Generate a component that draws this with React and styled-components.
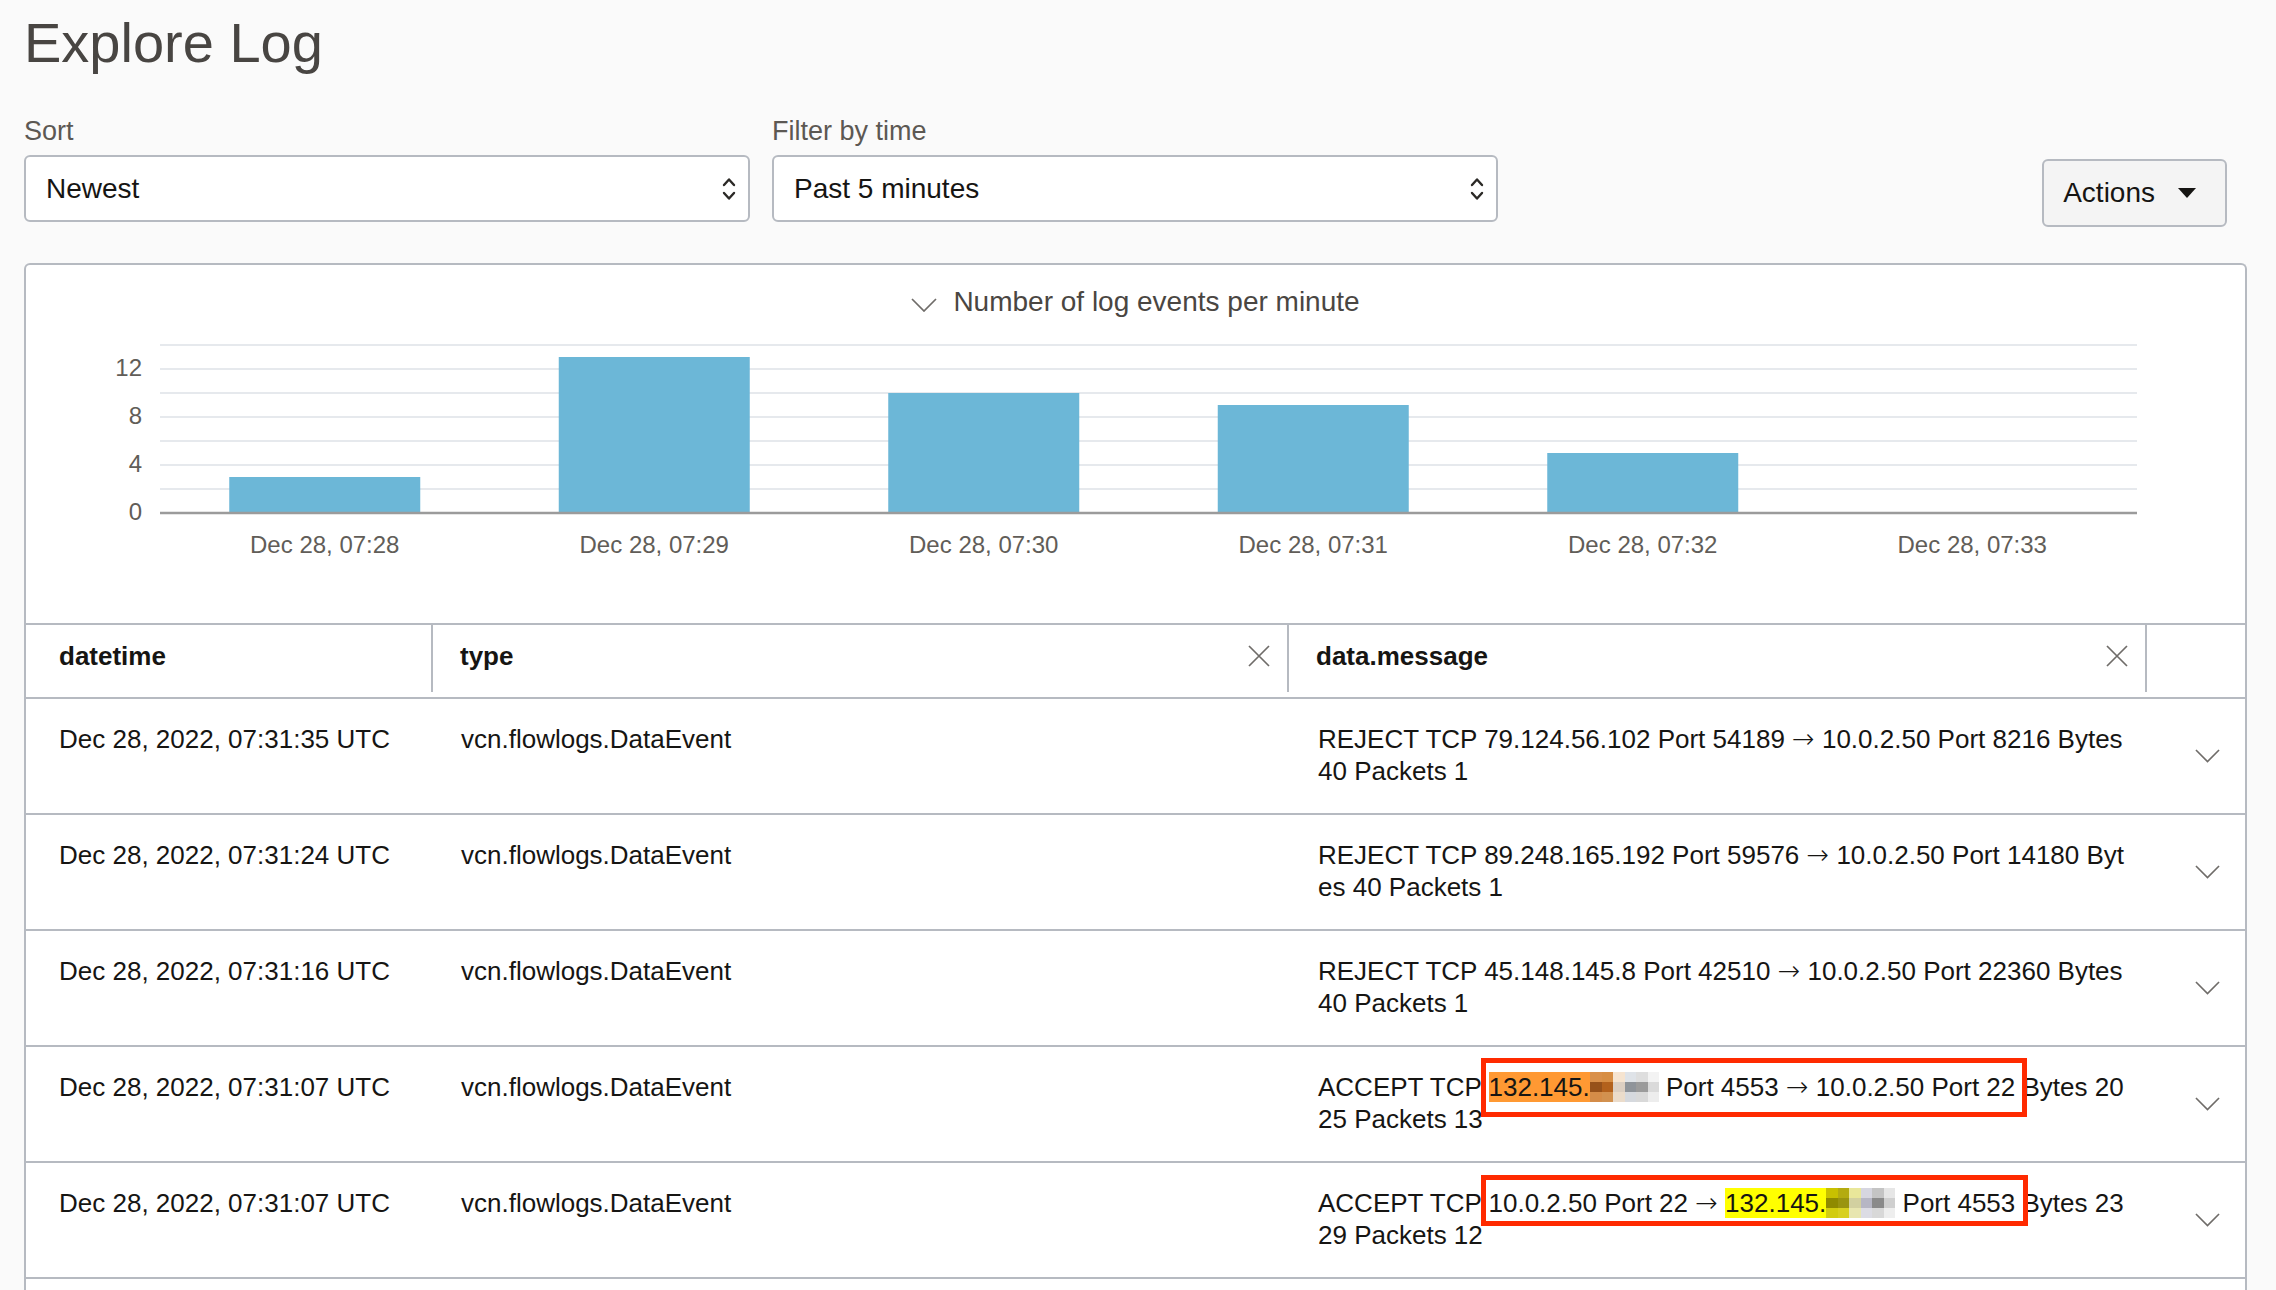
import React from "react";
import styled, { createGlobalStyle } from "styled-components";

const GlobalStyle = createGlobalStyle`
  * {
    box-sizing: border-box;
  }
  body {
    margin: 0;
    background: #fafafa;
    font-family: "Liberation Sans", Arial, Helvetica, sans-serif;
    color: #161513;
  }
`;

const LINE = "#b6bac1";

const chartBars = [
  { label: "Dec 28, 07:28", value: 3 },
  { label: "Dec 28, 07:29", value: 13 },
  { label: "Dec 28, 07:30", value: 10 },
  { label: "Dec 28, 07:31", value: 9 },
  { label: "Dec 28, 07:32", value: 5 },
  { label: "Dec 28, 07:33", value: 0 },
];

// pixelated (censored) part of the address, column by column
const orangeMask = [
  ["#d9904a", "#d78e44", "#f6e4d0", "#dfe3e8", "#dedede", "#f3f3f3"],
  ["#96511a", "#b3611c", "#dccfc2", "#8f949a", "#9b9b9b", "#dadada"],
  ["#d48c48", "#d2914f", "#ebdccb", "#d6d9de", "#d9d9d9", "#ededed"],
];

const yellowMask = [
  ["#c8c000", "#b4ab10", "#e9e79a", "#d6d6e0", "#c4c4c4", "#e6e6e6"],
  ["#8f8a00", "#9a9410", "#d2d0a0", "#b6b6c4", "#8a8a8a", "#cfcfcf"],
  ["#d2cc10", "#d8d020", "#e8e6b0", "#dcdce4", "#d8d8d8", "#eeeeee"],
];

const Mosaic = ({ cells }) => (
  <MaskSvg
    width="69"
    height="30"
    viewBox="0 0 6 3"
    preserveAspectRatio="none"
    shapeRendering="crispEdges"
  >
    {cells.map((row, r) =>
      row.map((c, i) => (
        <rect key={`${r}-${i}`} x={i} y={r} width="1" height="1" fill={c} />
      ))
    )}
  </MaskSvg>
);

// the arrow glyph is drawn from a font that has a long thin arrow
const withArrows = (text) => {
  if (typeof text !== "string") return text;
  const parts = text.split("→");
  return parts.map((part, i) => (
    <React.Fragment key={i}>
      {part}
      {i < parts.length - 1 && <Arrow>→</Arrow>}
    </React.Fragment>
  ));
};

const getRows = () => [
  {
    time: "Dec 28, 2022, 07:31:35 UTC",
    lines: [
      "REJECT TCP 79.124.56.102 Port 54189 → 10.0.2.50 Port 8216 Bytes",
      "40 Packets 1",
    ],
  },
  {
    time: "Dec 28, 2022, 07:31:24 UTC",
    lines: [
      "REJECT TCP 89.248.165.192 Port 59576 → 10.0.2.50 Port 14180 Byt",
      "es 40 Packets 1",
    ],
  },
  {
    time: "Dec 28, 2022, 07:31:16 UTC",
    lines: [
      "REJECT TCP 45.148.145.8 Port 42510 → 10.0.2.50 Port 22360 Bytes",
      "40 Packets 1",
    ],
  },
  {
    time: "Dec 28, 2022, 07:31:07 UTC",
    lines: [
      <>
        ACCEPT TCP{" "}
        <Marked $top={14} $bottom={15} $left={8} $right={12}>
          <Highlight $color="#ff9933">132.145.</Highlight>
          <Mosaic cells={orangeMask} /> Port 4553 <Arrow>→</Arrow> 10.0.2.50 Port 22
        </Marked>{" "}
        Bytes 20
      </>,
      "25 Packets 13",
    ],
  },
  {
    time: "Dec 28, 2022, 07:31:07 UTC",
    lines: [
      <>
        ACCEPT TCP{" "}
        <Marked $top={13} $bottom={8} $left={8} $right={13}>
          10.0.2.50 Port 22 <Arrow>→</Arrow>{" "}
          <Highlight $color="#ffff00">132.145.</Highlight>
          <Mosaic cells={yellowMask} /> Port 4553
        </Marked>{" "}
        Bytes 23
      </>,
      "29 Packets 12",
    ],
  },
];

const CHART_W = 2219;
const CHART_H = 304;
const PLOT_L = 134;
const PLOT_R = 2111;
const BASE_Y = 194;
const UNIT = 12;
const BAR_W = 191;

const Chart = () => {
  const band = (PLOT_R - PLOT_L) / chartBars.length;
  return (
    <ChartSvg width={CHART_W} height={CHART_H} viewBox={`0 0 ${CHART_W} ${CHART_H}`}>
      {[2, 4, 6, 8, 10, 12, 14].map((v) => (
        <line
          key={v}
          x1={PLOT_L}
          x2={PLOT_R}
          y1={BASE_Y - v * UNIT}
          y2={BASE_Y - v * UNIT}
          stroke="#e6e9ed"
          strokeWidth="2"
        />
      ))}
      {chartBars.map((b, i) =>
        b.value > 0 ? (
          <rect
            key={b.label}
            x={PLOT_L + band * i + (band - BAR_W) / 2}
            y={BASE_Y - b.value * UNIT}
            width={BAR_W}
            height={b.value * UNIT}
            fill="#6cb7d7"
          />
        ) : null
      )}
      <line x1={PLOT_L} x2={PLOT_R} y1={BASE_Y} y2={BASE_Y} stroke="#9b9b9b" strokeWidth="2.5" />
      {[0, 4, 8, 12].map((v) => (
        <text key={v} x="116" y={BASE_Y - v * UNIT + 7} textAnchor="end">
          {v}
        </text>
      ))}
      {chartBars.map((b, i) => (
        <text key={b.label} x={PLOT_L + band * (i + 0.5)} y="234" textAnchor="middle">
          {b.label}
        </text>
      ))}
    </ChartSvg>
  );
};

const UpDownIcon = () => (
  <SelectIcon width="14" height="26" viewBox="0 0 14 26">
    <polyline points="2,9 7,3.5 12,9" />
    <polyline points="2,17 7,22.5 12,17" />
  </SelectIcon>
);

const CloseIcon = () => (
  <ThinIcon width="22" height="22" viewBox="0 0 22 22">
    <path d="M1 1L21 21M21 1L1 21" />
  </ThinIcon>
);

const ChevronDown = ({ size = 26 }) => (
  <ThinIcon width={size} height={size * 0.54} viewBox="0 0 26 14">
    <polyline points="1,1 13,13 25,1" />
  </ThinIcon>
);

const App = () => {
  const rows = getRows();
  return (
    <Page>
      <GlobalStyle />
      <Title>Explore Log</Title>
      <Controls>
        <Field>
          <Label>Sort</Label>
          <Select>
            <span>Newest</span>
            <UpDownIcon />
          </Select>
        </Field>
        <Field>
          <Label>Filter by time</Label>
          <Select>
            <span>Past 5 minutes</span>
            <UpDownIcon />
          </Select>
        </Field>
        <ActionsButton>
          Actions
          <svg width="18" height="10" viewBox="0 0 18 10">
            <path d="M0 0H18L9 10Z" fill="#161513" />
          </svg>
        </ActionsButton>
      </Controls>

      <Panel>
        <ChartHeader>
          <ChevronDown />
          <span>Number of log events per minute</span>
        </ChartHeader>
        <Chart />

        <HeadRow>
          <HeadCell $first>datetime</HeadCell>
          <HeadCell $divider>
            type
            <CloseIcon />
          </HeadCell>
          <HeadCell $divider>
            data.message
            <CloseIcon />
          </HeadCell>
          <HeadCell $divider />
        </HeadRow>

        {rows.map((row, i) => (
          <Row key={i}>
            <Cell $pad={33}>{row.time}</Cell>
            <Cell $pad={30}>vcn.flowlogs.DataEvent</Cell>
            <Cell $pad={31}>
              {row.lines.map((line, j) => (
                <MsgLine key={j}>{withArrows(line)}</MsgLine>
              ))}
            </Cell>
            <ExpandCell>
              <ChevronDown size={25} />
            </ExpandCell>
          </Row>
        ))}
      </Panel>
    </Page>
  );
};

export default App;

const Page = styled.div`
  padding: 16px 29px 0 24px;
`;

const Title = styled.h1`
  margin: 0;
  font-size: 56px;
  line-height: 54px;
  font-weight: 400;
  color: #484542;
`;

const Controls = styled.div`
  display: flex;
  align-items: flex-start;
  gap: 22px;
  margin-top: 45px;
`;

const Field = styled.div`
  display: flex;
  flex-direction: column;
  width: 726px;
`;

const Label = styled.div`
  font-size: 27px;
  line-height: 32px;
  color: #5c5853;
  margin-bottom: 8px;
`;

const Select = styled.div`
  display: flex;
  align-items: center;
  justify-content: space-between;
  height: 67px;
  padding: 0 12px 0 20px;
  background: #fff;
  border: 2px solid ${LINE};
  border-radius: 6px;
  font-size: 28px;
  color: #161513;
`;

const SelectIcon = styled.svg`
  fill: none;
  stroke: #2b2926;
  stroke-width: 2.4;
  stroke-linecap: round;
  stroke-linejoin: round;
`;

const ActionsButton = styled.button`
  display: flex;
  align-items: center;
  gap: 23px;
  height: 68px;
  margin: 44px 20px 0 auto;
  padding: 0 29px 0 19px;
  background: #f4f4f4;
  border: 2px solid ${LINE};
  border-radius: 6px;
  font-family: inherit;
  font-size: 28px;
  color: #161513;
`;

const Panel = styled.section`
  margin-top: 36px;
  padding-bottom: 60px;
  background: #fff;
  border: 2px solid ${LINE};
  border-bottom: none;
  border-radius: 6px 6px 0 0;
`;

const ChartHeader = styled.div`
  display: flex;
  align-items: center;
  justify-content: center;
  gap: 16px;
  padding-top: 20px;
  height: 54px;
  font-size: 28px;
  line-height: 34px;
  color: #4a4642;

  svg {
    margin-top: 6px;
  }
`;

const ChartSvg = styled.svg`
  display: block;
  font-family: "Liberation Sans", Arial, sans-serif;
  font-size: 24px;
  fill: #615d58;
`;

const ThinIcon = styled.svg`
  flex: none;
  fill: none;
  stroke: #6f6c69;
  stroke-width: 1.7;
`;

const columns = "405px 856px 858px 1fr";

const HeadRow = styled.div`
  display: grid;
  grid-template-columns: ${columns};
  height: 76px;
  border-top: 2px solid ${LINE};
  border-bottom: 2px solid ${LINE};
`;

const HeadCell = styled.div`
  display: flex;
  align-items: center;
  justify-content: space-between;
  height: 67px;
  padding: 0 17px 6px ${(p) => (p.$first ? "33px" : "27px")};
  border-left: ${(p) => (p.$divider ? `2px solid ${LINE}` : "none")};
  font-size: 26px;
  font-weight: 700;
  line-height: 32px;
`;

const Row = styled.div`
  display: grid;
  grid-template-columns: ${columns};
  height: 116px;
  border-bottom: 2px solid ${LINE};
`;

const Cell = styled.div`
  padding: 24px 0 0 ${(p) => p.$pad}px;
  font-size: 26px;
  line-height: 32px;
  white-space: nowrap;
`;

const MsgLine = styled.div`
  white-space: nowrap;
`;

const Arrow = styled.span`
  font-family: "DejaVu Sans", sans-serif;
  font-size: 27px;
  font-weight: 200;
  line-height: 0;
`;

const ExpandCell = styled.div`
  display: flex;
  align-items: center;
  justify-content: flex-end;
  padding-right: 25px;
`;

const Highlight = styled.span`
  background: ${(p) => p.$color};
`;

const MaskSvg = styled.svg`
  display: inline-block;
  vertical-align: -6px;
`;

const Marked = styled.span`
  position: relative;

  &::after {
    content: "";
    position: absolute;
    top: -${(p) => p.$top}px;
    bottom: -${(p) => p.$bottom}px;
    left: -${(p) => p.$left}px;
    right: -${(p) => p.$right}px;
    border: 5px solid #ff2a00;
    pointer-events: none;
  }
`;
